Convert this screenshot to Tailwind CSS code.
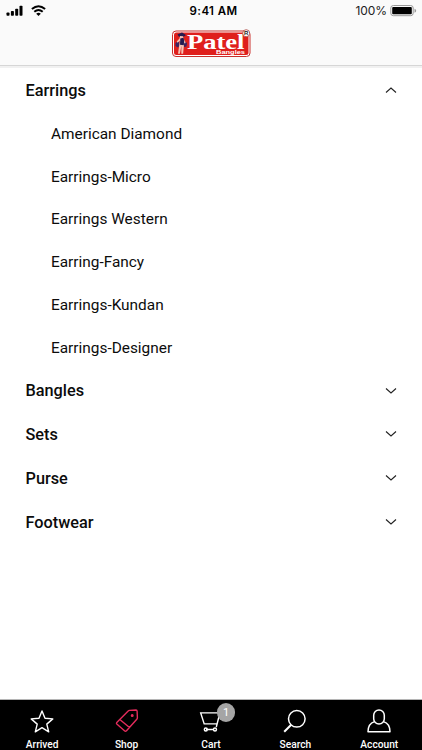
<!DOCTYPE html>
<html lang="en">
<head>
<meta charset="utf-8">
<title>Patel Bangles</title>
<script src="https://cdn.jsdelivr.net/npm/@tailwindcss/browser@4"></script>
</head>
<body class="bg-white">
<div class="flex flex-col w-[422px] h-[750px] overflow-hidden bg-white text-[#0c0c0c] font-['Roboto',sans-serif]">
  <header class="h-[66px] shrink-0 bg-[#fafafa] border-b border-[#d6d6d6] flex flex-col">
    <div class="h-[22px] grid grid-cols-3 items-center px-[6px] font-['Inter',sans-serif] text-black">
      <div class="flex items-center gap-2">
        <svg width="17" height="12" viewBox="0 0 17 12"><rect x=".5" y="7.500" width="3" height="3.200" rx=".8"/><rect x="4.900" y="6" width="3" height="4.700" rx=".8"/><rect x="9.200" y="3.800" width="3" height="6.900" rx=".8"/><rect x="13.500" y=".7" width="3" height="10" rx=".8"/></svg>
        <svg width="15" height="12" viewBox="0 0 15 12" fill="none" stroke="#000" stroke-width="2"><path d="M.9 4.100Q7.500-1.500 14.100 4.100M3.300 6.800Q7.500 3.100 11.700 6.800"/><path d="M5.200 8.700Q7.500 6.800 9.800 8.700L7.500 10.900Z" fill="#000" stroke="none"/></svg>
      </div>
      <div class="text-center text-[11.500px] leading-[22px] font-semibold tracking-[0.4px] whitespace-nowrap pl-[5px]">9:41 AM</div>
      <div class="flex items-center justify-end gap-[3px] -mr-[1px]">
        <span class="text-[12px] leading-[22px] tracking-[-0.1px] text-[#222]">100%</span>
        <svg width="27" height="12" viewBox="0 0 27 12"><rect x=".8" y=".5" width="22.400" height="10.200" rx="2.500" fill="#fafafa" stroke="#999"/><rect x="2.200" y="1.900" width="19.600" height="7.400" rx="1"/><path d="M24.500 3.700v4q1.700-.5 1.700-2t-1.700-2Z" fill="#999"/></svg>
      </div>
    </div>
    <div class="flex justify-center pt-[7px]">
      <svg width="82" height="30" viewBox="0 0 82 30">
        <rect x="2.500" y="2" width="77.500" height="25.500" rx="3.500" fill="#fff" stroke="#c9302c"/>
        <rect x="4" y="3.500" width="74.500" height="22.500" rx="2.500" fill="#df1f1c"/>
        <path d="M5.500 14l3-2 1.500 4-2 2.500-2.500-1.500zM14 12l3 2-.5 3.500-2.500.5z" fill="#3b2361"/>
        <path d="M7.500 5.500L12 3.500l4 2.500-2 1.500-5 .2z" fill="#241a50"/>
        <path d="M10 7l3 .2.800 3 1.800 3-.6 1.500-1.700-2 .7 3-.9 9h-1.800l.1-8-1.500 8H8l1.300-9 .7-4-2.500 2-.8-1.200 2.800-3z" fill="#f4c3b5"/>
        <path d="M10.300 9.500l3.200-.8.700 3-.4 4.500-3.800-.4z" fill="#241a50"/>
        <text x="17" y="20" textLength="57.500" lengthAdjust="spacingAndGlyphs" font-family="Liberation Serif, serif" font-weight="700" font-size="20" fill="#fff">Patel</text>
        <text x="46" y="25.200" textLength="29" lengthAdjust="spacingAndGlyphs" font-family="Liberation Sans, sans-serif" font-weight="700" font-size="6.200" fill="#fff">Bangles</text>
        <circle cx="76.200" cy="4.200" r="3.500" fill="#fff" stroke="#a9443f" stroke-width=".8"/>
        <text x="74.100" y="6.400" font-family="Liberation Sans, sans-serif" font-weight="700" font-size="6" fill="#222">R</text>
      </svg>
    </div>
  </header>
  <main class="flex-1 border-t-2 border-[#f1f1f1] pl-[25.500px] pr-[25px]">
    <div class="h-[44px] flex items-center justify-between text-[16.300px] font-medium pt-[2px]"><span class="pt-px">Earrings</span><svg class="mb-[2px]" width="12" height="8" viewBox="0 0 12 8" fill="none" stroke="#222" stroke-width="1.100"><path d="M1 6.500L6 2l5 4.500"/></svg></div>
    <ul class="pl-[25.500px] text-[15.400px]">
      <li class="h-[42.800px] flex items-center pt-[2px]">American Diamond</li>
      <li class="h-[42.800px] flex items-center pt-[2px]">Earrings-Micro</li>
      <li class="h-[42.800px] flex items-center pt-[2px]">Earrings Western</li>
      <li class="h-[42.800px] flex items-center pt-[2px]">Earring-Fancy</li>
      <li class="h-[42.800px] flex items-center pt-px">Earrings-Kundan</li>
      <li class="h-[42.800px] flex items-center pt-[2px]">Earrings-Designer</li>
    </ul>
    <div class="text-[16.300px] font-medium">
      <div class="h-[43.800px] flex items-center justify-between"><span class="pt-[2px]">Bangles</span><svg width="12" height="8" viewBox="0 0 12 8" fill="none" stroke="#222" stroke-width="1.100"><path d="M1 1.500L6 6l5-4.500"/></svg></div>
      <div class="h-[43.800px] flex items-center justify-between"><span class="pt-[2px]">Sets</span><svg width="12" height="8" viewBox="0 0 12 8" fill="none" stroke="#222" stroke-width="1.100"><path d="M1 1.500L6 6l5-4.500"/></svg></div>
      <div class="h-[43.800px] flex items-center justify-between"><span class="pt-[2px]">Purse</span><svg width="12" height="8" viewBox="0 0 12 8" fill="none" stroke="#222" stroke-width="1.100"><path d="M1 1.500L6 6l5-4.500"/></svg></div>
      <div class="h-[43.800px] flex items-center justify-between"><span class="pt-[2px]">Footwear</span><svg width="12" height="8" viewBox="0 0 12 8" fill="none" stroke="#222" stroke-width="1.100"><path d="M1 1.500L6 6l5-4.500"/></svg></div>
    </div>
  </main>
  <nav class="h-[51px] shrink-0 bg-black border-t border-[#b5b5b5] grid grid-cols-5 text-white text-[10.200px] leading-[12px] font-medium text-center">
    <div class="flex flex-col items-center pt-[8px]">
      <svg width="26" height="28" viewBox="0 0 26 28" fill="none" stroke="#fff" stroke-width="1.400" stroke-linejoin="round"><path d="M13 3l3 7.300 7.800.6-6 5.200 1.900 7.700L13 19.700l-6.700 4.100 1.900-7.700-6-5.200 7.800-.6z"/></svg>
      <span class="mt-[3px]">Arrived</span>
    </div>
    <div class="flex flex-col items-center pt-[8px]">
      <svg width="26" height="28" viewBox="0 0 26 28" fill="none" stroke="#e42c5c" stroke-width="1.400" stroke-linejoin="round"><path d="M2.800 14.500L14.200 3.100Q14.700 2.500 15.500 2.400L22 2Q23 2 23.100 3L23.400 9.700Q23.400 10.500 22.800 11.200L12.500 22.700Q11.500 23.700 10.500 22.700L2.800 16Q2.100 15.200 2.800 14.500ZM5.800 11.500l9.700 8"/><circle cx="18.200" cy="7.400" r=".8" fill="#e42c5c"/></svg>
      <span class="mt-[3px]">Shop</span>
    </div>
    <div class="relative flex flex-col items-center pt-[8px]">
      <svg width="26" height="28" viewBox="0 0 26 28" fill="none" stroke="#fff" stroke-width="1.400"><path d="M24.500 2.500l-2.500 2-3.700 14.500M22 4.900H2.700l3.500 11h13M8 21.500h8"/><circle cx="7.800" cy="21.500" r="1.500"/><circle cx="17" cy="21.500" r="1.500"/></svg>
      <span class="mt-[3px]">Cart</span>
      <span class="absolute left-[48px] top-[3px] size-[18.500px] rounded-full bg-[#a5a5a5] text-[11px] leading-[19px] font-normal">1</span>
    </div>
    <div class="flex flex-col items-center pt-[8px]">
      <svg width="26" height="28" viewBox="0 0 26 28" fill="none" stroke="#fff" stroke-width="1.500"><circle cx="14.800" cy="10.800" r="8.300"/><path d="M9.200 16.800L2.200 23.800" stroke-width="2"/></svg>
      <span class="mt-[3px]">Search</span>
    </div>
    <div class="flex flex-col items-center pt-[8px] pr-px">
      <svg width="26" height="28" viewBox="0 0 26 28" fill="none" stroke="#fff" stroke-width="1.500" stroke-linejoin="round"><path d="M8.500 13.600Q2 15.500 2 23.800H24Q24 15.500 17.500 13.600"/><rect x="7.700" y="2" width="10.600" height="14" rx="5.300"/></svg>
      <span class="mt-[3px]">Account</span>
    </div>
  </nav>
</div>
</body>
</html>
